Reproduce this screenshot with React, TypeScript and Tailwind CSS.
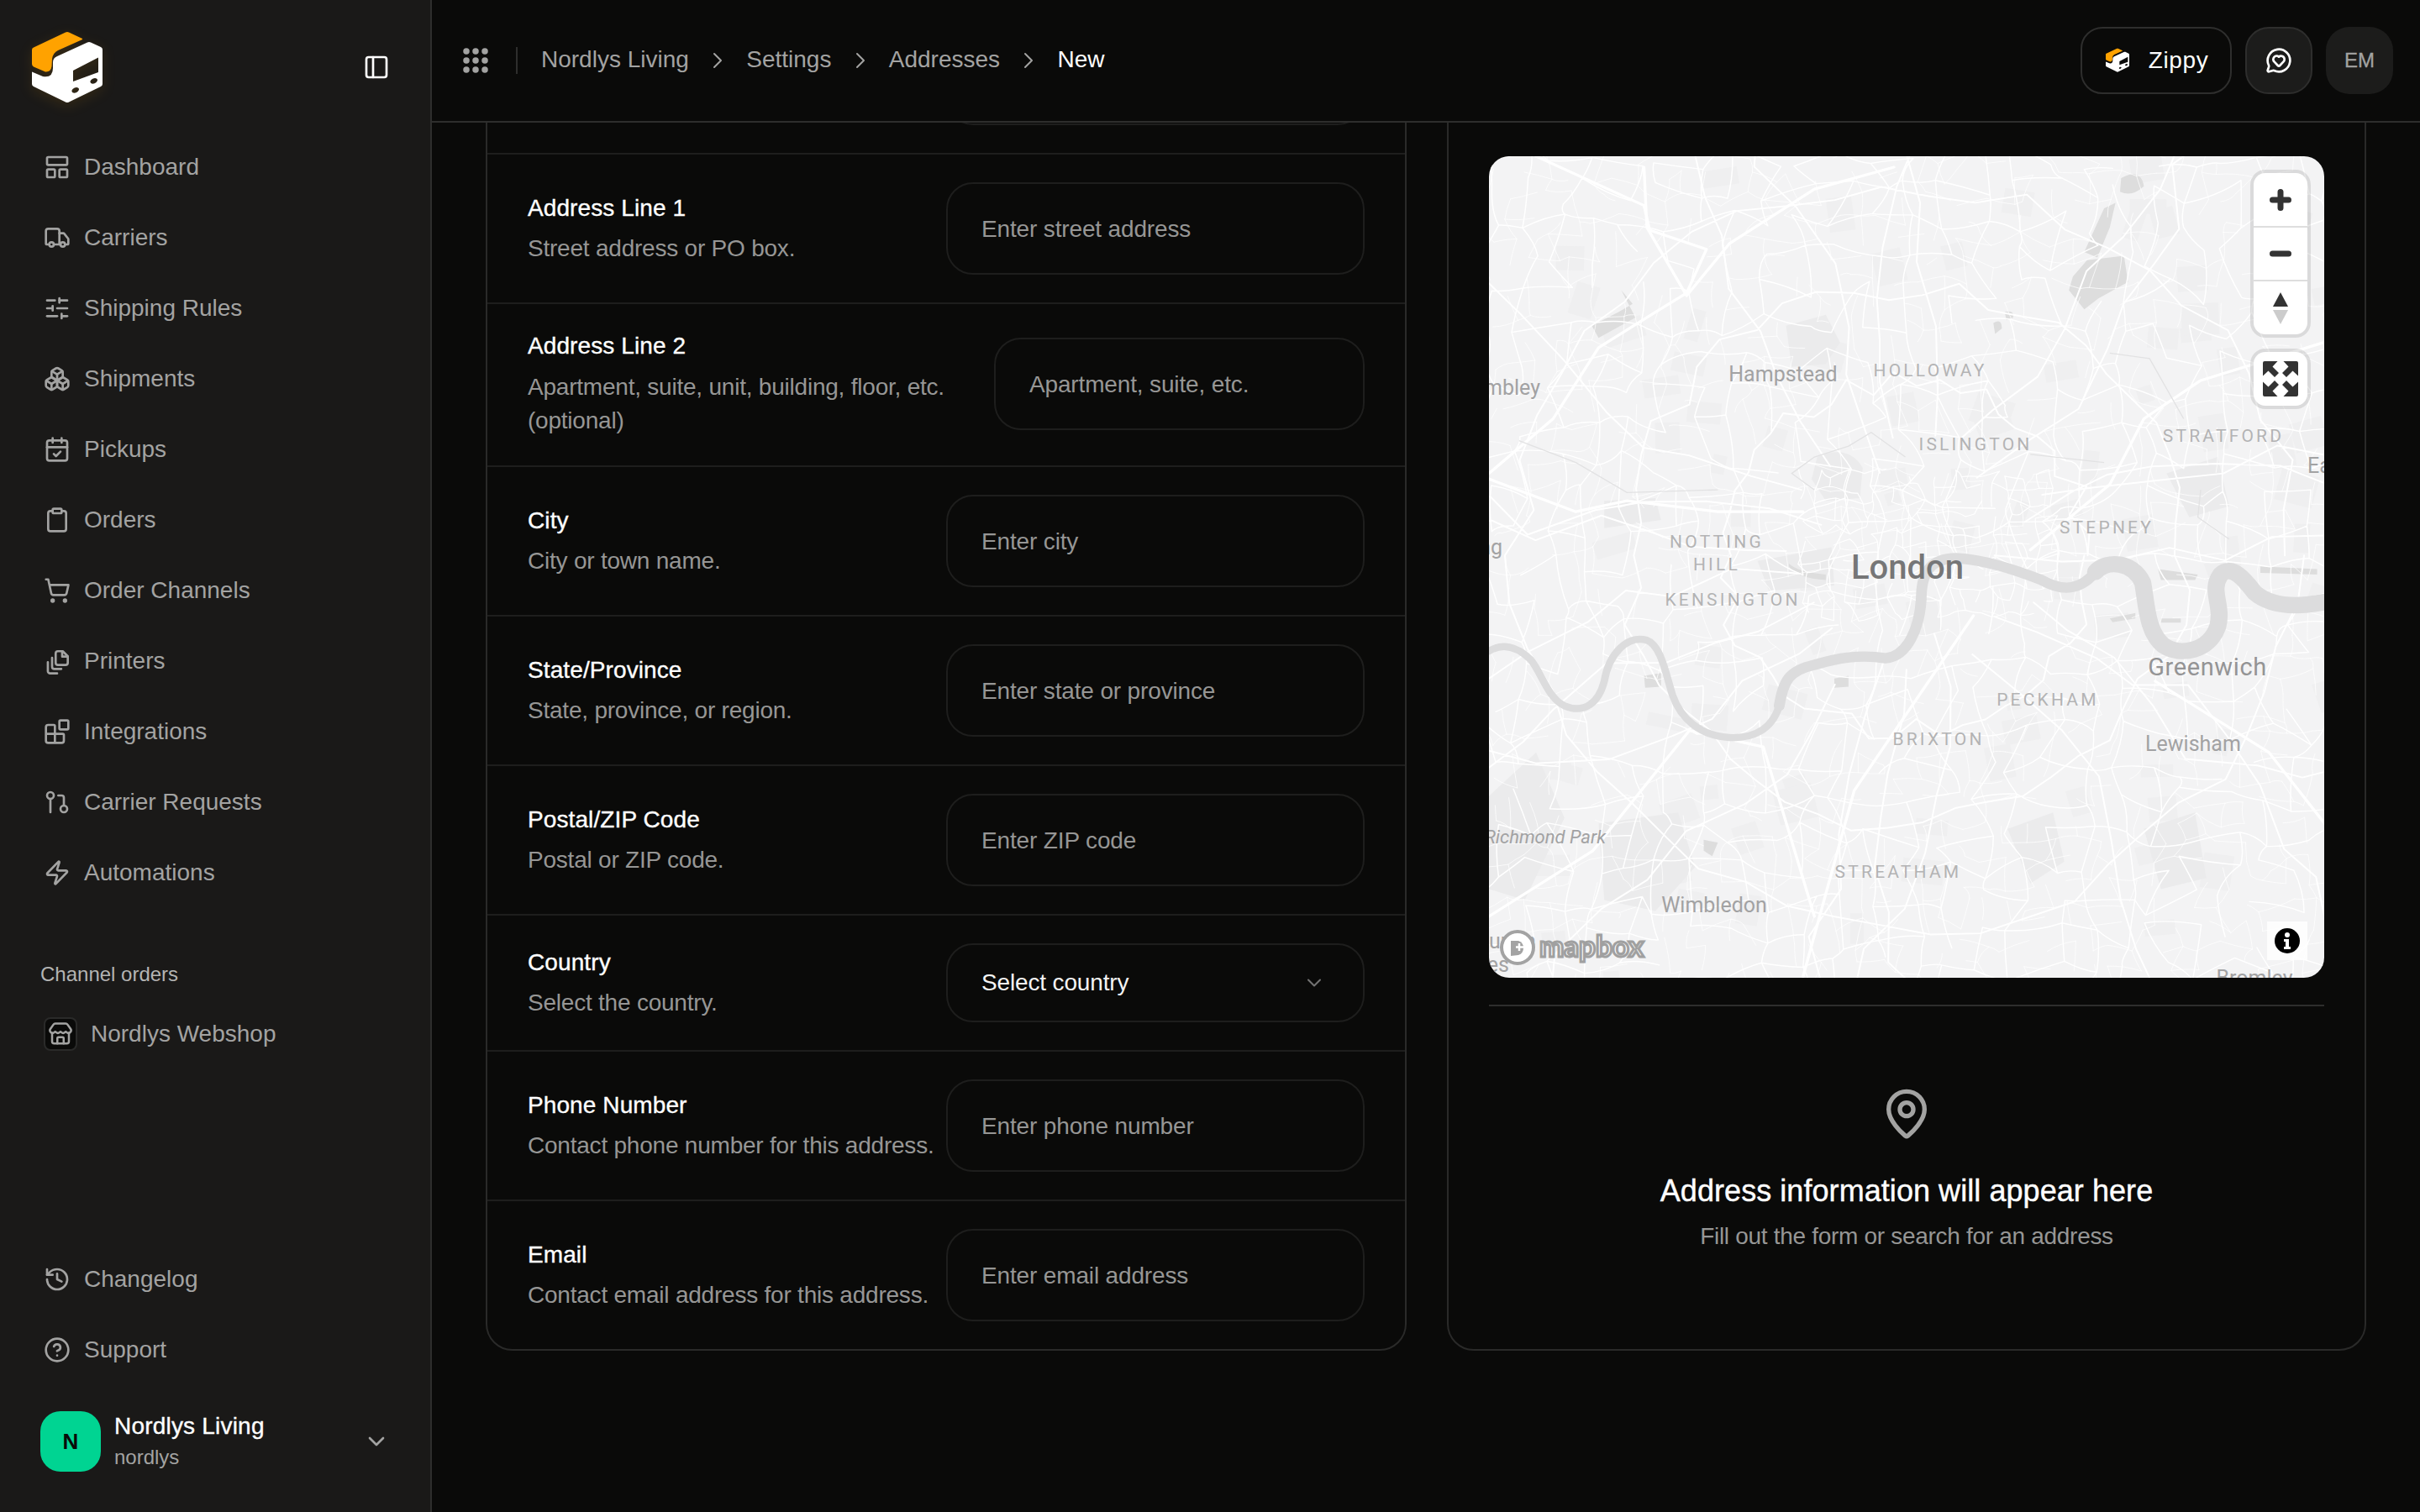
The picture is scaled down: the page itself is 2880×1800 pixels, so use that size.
import {
  Blocks,
  Boxes,
  CalendarCheck,
  ChevronDown,
  ChevronRight,
  CircleHelp,
  Clipboard,
  GitPullRequest,
  History,
  LayoutPanelTop,
  MapPin,
  MessageCircleHeart,
  PanelLeft,
  ShoppingCart,
  SlidersHorizontal,
  Store,
  Truck,
  Zap,
} from "lucide-react";

function PrintersIcon({ className }: { className?: string }) {
  return (
    <svg
      viewBox="0 0 24 24"
      fill="none"
      stroke="currentColor"
      strokeWidth="2"
      strokeLinecap="round"
      strokeLinejoin="round"
      className={className}
    >
      <path d="M12.7 3.2h4.3l4.5 4.5v5.8a2 2 0 0 1-2 2h-6.8a2 2 0 0 1-2-2v-8.3a2 2 0 0 1 2-2z" />
      <path d="M16.5 3.5v4.5h4.8" />
      <path d="M7.5 9v8a2 2 0 0 0 2 2h6.2" />
      <path d="M3.7 13v8a2 2 0 0 0 2 2h6.3" />
    </svg>
  );
}

const navItems = [
  { label: "Dashboard", icon: LayoutPanelTop },
  { label: "Carriers", icon: Truck },
  { label: "Shipping Rules", icon: SlidersHorizontal },
  { label: "Shipments", icon: Boxes },
  { label: "Pickups", icon: CalendarCheck },
  { label: "Orders", icon: Clipboard },
  { label: "Order Channels", icon: ShoppingCart },
  { label: "Printers", icon: PrintersIcon },
  { label: "Integrations", icon: Blocks },
  { label: "Carrier Requests", icon: GitPullRequest },
  { label: "Automations", icon: Zap },
];

function Logo({ className }: { className: string }) {
  return (
    <svg viewBox="0 0 96 96" className={className}>
      <path
        d="M46 5.5 Q48 4.5 50 5.5 L66 13 Q66.5 14 65 14.5 L37 27 Q31 30 30 37 L29.5 46 Q28.5 53 22 52.5 L8 46.5 Q6 45.5 6 43 L6 26.5 Q6 24 8 23.5 Z"
        fill="#ffa200"
      />
      <path
        fillRule="evenodd"
        d="M72 17.5 Q74 16.5 76 17.5 L88 23 Q90 24 90 26 L90 67 Q90 69 88 70 L50 88.5 Q48 89.5 46 88.5 L8 70 Q6 69 6 67 L6 52.5 L19 58 Q31 60 31 48 L31 41 Q31 36 36 34 Z M55 51 L85 35.5 L85 53 L55 64 Z M59 71 a4.5 3 -25 1 0 0.01 0 Z M81 60 a4.5 3 -25 1 0 0.01 0 Z"
        fill="#fff"
      />
    </svg>
  );
}

function Sidebar() {
  return (
    <aside className="flex h-full w-[514px] shrink-0 flex-col border-r-2 border-[#2e2e2d] bg-[#1a1918] text-[28px] leading-[40px] text-[#a3a3a2]">
      <div className="flex h-[157px] items-start justify-between pl-[32px] pr-[48px] pt-[33px]">
        <Logo className="size-[96px] drop-shadow-[0_4px_8px_rgba(255,162,0,0.12)]" />
        <PanelLeft className="mt-[31px] size-[32px] text-white" />
      </div>

      <nav className="flex flex-col">
        {navItems.map(({ label, icon: Icon }) => (
          <a key={label} className="flex h-[84px] items-center gap-4 pl-[52px]">
            <Icon className="size-8" />
            {label}
          </a>
        ))}
      </nav>

      <div className="mt-[63px] pl-[48px] text-[24px] leading-[32px] text-[#b4b4b3]">Channel orders</div>
      <a className="mt-[13px] flex h-[84px] items-center gap-4 pl-[52px]">
        <span className="flex size-[40px] items-center justify-center rounded-[8px] border-2 border-[#2a2a29] bg-[#0a0a09]">
          <Store className="size-[30px]" />
        </span>
        Nordlys Webshop
      </a>

      <div className="mt-auto flex flex-col">
        <a className="flex h-[84px] items-center gap-4 pl-[52px]">
          <History className="size-8" />
          Changelog
        </a>
        <a className="flex h-[84px] items-center gap-4 pl-[52px]">
          <CircleHelp className="size-8" />
          Support
        </a>
      </div>

      <div className="mb-[48px] mt-[30px] flex items-center gap-[16px] pl-[48px] pr-[48px]">
        <div className="flex size-[72px] items-center justify-center rounded-[24px] bg-[#00d492] text-[26px] font-bold text-[#0a0a09]">
          N
        </div>
        <div className="flex flex-1 flex-col">
          <span className="text-[28px] leading-[38px] tracking-[0.2px] text-white [-webkit-text-stroke:0.35px_white]">
            Nordlys Living
          </span>
          <span className="mt-[1px] text-[24px] leading-[34px] text-[#a3a3a2]">nordlys</span>
        </div>
        <ChevronDown className="size-8" />
      </div>
    </aside>
  );
}

function Crumb({ label, last }: { label: string; last?: boolean }) {
  return (
    <>
      <span className={`-mt-[2px] ${last ? "text-white" : ""}`}>{label}</span>
      {!last && <ChevronRight strokeWidth={1.5} className="size-8" />}
    </>
  );
}

function Header() {
  return (
    <header className="z-10 flex h-[146px] shrink-0 items-center justify-between border-b-2 border-[#2e2e2d] bg-[#0a0a09] pl-[36px] pr-[32px]">
      <div className="flex items-center text-[28px] leading-[40px] text-[#a3a3a2]">
        <svg viewBox="0 0 32 32" className="size-8" fill="#a3a3a2">
          {[5, 16, 27].map((y) =>
            [5, 16, 27].map((x) => <circle key={`${x}-${y}`} cx={x} cy={y} r={3.75} />)
          )}
        </svg>
        <div className="ml-[32px] mr-[28px] h-[32px] w-[2px] bg-[#2e2e2d]" />
        <div className="flex items-center gap-[18.2px]">
          <Crumb label="Nordlys Living" />
          <Crumb label="Settings" />
          <Crumb label="Addresses" />
          <Crumb label="New" last />
        </div>
      </div>
      <div className="flex items-center gap-[16px]">
        <button className="flex h-[80px] w-[180px] items-center justify-center gap-[21px] rounded-[26px] border-2 border-[#2e2e2d] text-[28px] tracking-[0.6px] text-white">
          <Logo className="size-[32px]" />
          Zippy
        </button>
        <button className="flex size-[80px] items-center justify-center rounded-[28px] border-2 border-[#2e2e2d] bg-[#1c1c1b] text-white">
          <MessageCircleHeart className="size-8" />
        </button>
        <div className="flex size-[80px] items-center justify-center rounded-[28px] bg-[#1c1c1b] text-[24px] text-[#a3a3a2] [-webkit-text-stroke:0.3px_#a3a3a2]">
          EM
        </div>
      </div>
    </header>
  );
}

function FieldText({ label, children, wrap }: { label: string; children: React.ReactNode; wrap?: boolean }) {
  return (
    <>
      <div className="text-[28px] leading-[40px] tracking-[0.1px] text-white [-webkit-text-stroke:0.35px_white]">{label}</div>
      <div
        className={`text-[28px] leading-[40px] tracking-[-0.22px] text-[#969695] ${
          wrap ? "mt-[9px]" : "mt-2 whitespace-nowrap"
        }`}
      >
        {children}
      </div>
    </>
  );
}

function Field({ label, children, placeholder }: { label: string; children: React.ReactNode; placeholder: string }) {
  return (
    <div className="flex items-center justify-between border-t-2 border-[#1e1e1d] py-[33px] pl-[48px] pr-[48px]">
      <div className="min-w-0 flex-1">
        <FieldText label={label}>{children}</FieldText>
      </div>
      <div className="flex h-[110px] w-[498px] shrink-0 items-center rounded-[32px] border-2 border-[#1e1e1d] pl-[40px] pt-[2px] text-[28px] tracking-[-0.15px] text-[#969695]">
        {placeholder}
      </div>
    </div>
  );
}

function FormCard() {
  return (
    <div className="overflow-hidden rounded-[32px] border-2 border-[#2a2a29]">
      {/* row scrolled away under the header */}
      <div className="flex justify-end py-[33px] pr-[48px]">
        <div className="h-[110px] w-[498px] rounded-[32px] border-2 border-[#1e1e1d]" />
      </div>
      <Field label="Address Line 1" placeholder="Enter street address">
        Street address or PO box.
      </Field>
      <div className="flex items-center justify-between border-t-2 border-[#1e1e1d] pb-[33px] pl-[48px] pr-[48px] pt-[30px]">
        <div className="min-w-0 flex-1">
          <FieldText label="Address Line 2" wrap>
            Apartment, suite, unit, building, floor, etc. (optional)
          </FieldText>
        </div>
        <div className="flex h-[110px] w-[441px] shrink-0 items-center rounded-[32px] border-2 border-[#1e1e1d] pl-[40px] pt-[2px] text-[28px] tracking-[-0.15px] text-[#969695]">
          Apartment, suite, etc.
        </div>
      </div>
      <Field label="City" placeholder="Enter city">
        City or town name.
      </Field>
      <Field label="State/Province" placeholder="Enter state or province">
        State, province, or region.
      </Field>
      <Field label="Postal/ZIP Code" placeholder="Enter ZIP code">
        Postal or ZIP code.
      </Field>
      <div className="flex items-center justify-between border-t-2 border-[#1e1e1d] py-[33px] pl-[48px] pr-[48px]">
        <div>
          <FieldText label="Country">Select the country.</FieldText>
        </div>
        <div className="flex h-[94px] w-[498px] items-center justify-between rounded-[32px] border-2 border-[#1e1e1d] pl-[40px] pr-[44px] text-[28px] tracking-[-0.15px] text-[#f4f4f4]">
          Select country
          <ChevronDown className="size-7 text-[#737373]" strokeWidth={1.75} />
        </div>
      </div>
      <Field label="Phone Number" placeholder="Enter phone number">
        Contact phone number for this address.
      </Field>
      <Field label="Email" placeholder="Enter email address">
        Contact email address for this address.
      </Field>
    </div>
  );
}

// seeded so the street web is the same on every load
function makeRandom(seed: number) {
  return () => {
    seed = (seed + 0x6d2b79f5) | 0;
    let t = Math.imul(seed ^ (seed >>> 15), 1 | seed);
    t = (t + Math.imul(t ^ (t >>> 7), 61 | t)) ^ t;
    return ((t ^ (t >>> 14)) >>> 0) / 4294967296;
  };
}

function jitterGrid(seed: number, x0: number, y0: number, x1: number, y1: number, cell: number, keep: number) {
  const rnd = makeRandom(seed);
  const cols = Math.ceil((x1 - x0) / cell);
  const rows = Math.ceil((y1 - y0) / cell);
  const pts: [number, number][][] = [];
  for (let i = 0; i <= cols; i++) {
    pts[i] = [];
    for (let j = 0; j <= rows; j++) {
      pts[i][j] = [x0 + i * cell + (rnd() - 0.5) * cell * 0.8, y0 + j * cell + (rnd() - 0.5) * cell * 0.8];
    }
  }
  const seg = (a: [number, number], b: [number, number]) => {
    const cx = (a[0] + b[0]) / 2 + (rnd() - 0.5) * cell * 0.3;
    const cy = (a[1] + b[1]) / 2 + (rnd() - 0.5) * cell * 0.3;
    return `M${a[0].toFixed(0)} ${a[1].toFixed(0)}Q${cx.toFixed(0)} ${cy.toFixed(0)} ${b[0].toFixed(0)} ${b[1].toFixed(0)}`;
  };
  let d = "";
  for (let i = 0; i <= cols; i++) {
    for (let j = 0; j <= rows; j++) {
      if (i < cols && rnd() < keep) d += seg(pts[i][j], pts[i + 1][j]);
      if (j < rows && rnd() < keep) d += seg(pts[i][j], pts[i][j + 1]);
    }
  }
  return d;
}

function radialRoads(seed: number) {
  const rnd = makeRandom(seed);
  let d = "";
  for (let a = 0; a < 22; a++) {
    let ang = (a / 22) * Math.PI * 2 + rnd() * 0.14;
    let r = 150 + rnd() * 120;
    d += `M${(780 + Math.cos(ang) * r).toFixed(0)} ${(770 + Math.sin(ang) * r).toFixed(0)}`;
    while (r < 1200) {
      r += 70 + rnd() * 50;
      ang += (rnd() - 0.5) * 0.2;
      d += `L${(780 + Math.cos(ang) * r).toFixed(0)} ${(770 + Math.sin(ang) * r).toFixed(0)}`;
    }
  }
  for (const radius of [320, 490, 680]) {
    let first = true;
    for (let a = 0; a <= 50; a++) {
      const ang = (a / 50) * Math.PI * 2;
      const r = radius + (rnd() - 0.5) * 50;
      d += `${first ? "M" : "L"}${(780 + Math.cos(ang) * r).toFixed(0)} ${(770 + Math.sin(ang) * r).toFixed(0)}`;
      first = false;
    }
  }
  return d;
}

function blocks(seed: number) {
  const rnd = makeRandom(seed);
  const list: { x: number; y: number; w: number; h: number; r: number }[] = [];
  for (let i = 0; i < 90; i++) {
    list.push({
      x: 47 + rnd() * 1471,
      y: 40 + rnd() * 1503,
      w: 24 + rnd() * 50,
      h: 22 + rnd() * 44,
      r: rnd() * 40 - 20,
    });
  }
  return list;
}

const fineStreets = jitterGrid(31, 47, 40, 1518, 1543, 38, 0.42);
const streets = jitterGrid(11, 47, 40, 1518, 1543, 62, 0.72);
const centreStreets = jitterGrid(23, 600, 620, 1040, 860, 26, 0.68);
const arterials = radialRoads(7);
const mapBlocks = blocks(5);

const faintLabels = [
  { t: "HOLLOWAY", x: 525, y: 255 },
  { t: "ISLINGTON", x: 579, y: 343 },
  { t: "STRATFORD", x: 874, y: 333 },
  { t: "NOTTING", x: 271, y: 459 },
  { t: "HILL", x: 271, y: 486 },
  { t: "KENSINGTON", x: 290, y: 528 },
  { t: "STEPNEY", x: 735, y: 442 },
  { t: "PECKHAM", x: 665, y: 647 },
  { t: "BRIXTON", x: 535, y: 694 },
  { t: "STREATHAM", x: 487, y: 852 },
];

const placeLabels = [
  { t: "Hampstead", x: 350, y: 259, a: "middle" },
  { t: "Wembley", x: 61, y: 275, a: "end" },
  { t: "Ealing", x: 16, y: 465, a: "end" },
  { t: "Ea", x: 974, y: 368, a: "start" },
  { t: "Lewisham", x: 838, y: 699, a: "middle" },
  { t: "Wimbledon", x: 268, y: 891, a: "middle" },
  { t: "Bromley", x: 911, y: 978, a: "middle" },
  { t: "upon", x: 0, y: 934, a: "start" },
  { t: "Thames", x: 24, y: 962, a: "end" },
];

function MapArt() {
  return (
    <svg viewBox="0 0 994 978" className="block h-full w-full font-['Roboto',sans-serif]">
      <rect width="994" height="978" fill="#f3f3f4" />
      <g transform="translate(-31.8 -26) scale(0.676 0.651)">
        {mapBlocks.map((b, i) => (
          <rect key={i} x={b.x} y={b.y} width={b.w} height={b.h} fill="#efeff0" transform={`rotate(${b.r} ${b.x} ${b.y})`} />
        ))}
        {/* parks */}
        <g fill="#ebebec">
          <path d="M570 350 L640 330 L665 380 L640 420 L580 425 Z" />
          <path d="M520 780 L650 755 L655 825 L540 835 Z" />
          <path d="M625 590 Q680 565 705 610 L700 665 L640 670 L615 630 Z" />
          <path d="M240 1260 L380 1240 L410 1340 L340 1420 L250 1400 Z" />
          <path d="M47 1210 L130 1130 L180 1250 L110 1400 L47 1380 Z" />
          <path d="M250 670 L340 665 L350 705 L250 720 Z" />
          <path d="M960 1270 L1040 1240 L1060 1330 L1000 1370 Z" />
          <path d="M1240 620 L1330 590 L1350 680 L1280 700 Z" />
          <path d="M1200 1270 L1290 1240 L1310 1360 L1230 1380 Z" />
        </g>
        {/* reservoirs and lakes */}
        <g fill="#dddddd">
          <path d="M1130 135 L1150 125 L1140 170 L1118 225 L1095 215 Z" />
          <path d="M1100 230 L1165 222 L1172 270 L1120 300 L1095 320 L1068 285 L1075 260 Z" />
          <path d="M1160 80 Q1195 60 1200 95 Q1180 115 1158 105 Z" />
          <path d="M228 350 L275 325 L300 310 L280 285 L305 335 L240 372 Z" />
          <path d="M575 785 Q590 800 640 805 L640 815 Q590 812 575 790 Z" />
          <path d="M935 345 Q950 335 950 355 L938 365 Z M955 325 Q972 320 970 335 L958 340 Z" />
          <path d="M1405 790 L1505 795 L1505 805 L1405 802 Z" />
          <path d="M320 990 L350 985 L350 1010 L322 1012 Z" />
          <path d="M655 995 L680 990 L680 1010 L655 1012 Z" />
          <path d="M1140 885 L1185 875 L1185 885 L1145 892 Z" />
          <path d="M1225 795 L1295 805 L1290 815 L1230 815 Z M1230 885 L1265 885 L1265 893 L1230 893 Z" />
          <path d="M425 1290 L450 1295 L440 1320 L425 1310 Z" />
        </g>
        {/* streets */}
        <g fill="none" stroke="#ffffff" strokeLinejoin="round" strokeLinecap="round">
          <path d={fineStreets} strokeWidth="1.4" strokeOpacity="0.8" />
          <path d={streets} strokeWidth="2.2" />
          <path d={centreStreets} strokeWidth="1.8" />
          <path d={arterials} strokeWidth="3" />
          <path
            strokeWidth="5"
            d="M130 40 L320 130 L330 175 L430 210 L395 290 L340 325 L240 390 L160 520 L47 620 M320 60 L325 170 L395 295 L470 200 L620 100 L760 60 M47 630 L200 690 L290 670 L450 690 L600 690 M1518 380 L1300 450 L1200 520 L1140 640 L1000 760 M620 1430 L530 1120 L400 1090 L230 1310 L47 1430 M900 880 L690 1200 L600 1540 M1220 1000 L1420 1130 L1518 1260"
          />
        </g>
        {/* river */}
        <g fill="none" stroke="#dcdcdd" strokeLinecap="round" strokeLinejoin="round">
          <path
            strokeWidth="13"
            d="M47 945 C70 930 95 935 120 960 C140 985 150 1030 180 1045 C215 1060 240 1040 250 1000 C258 950 290 915 325 925 C350 935 358 985 370 1025 C385 1070 420 1100 470 1103 C510 1105 545 1090 558 1045"
          />
          <path
            strokeWidth="19"
            d="M558 1045 C565 1000 575 980 620 970 C660 958 700 950 745 958 C785 955 805 900 808 850 C808 800 825 775 870 775 C920 778 970 795 1020 815 C1060 838 1090 832 1115 800"
          />
          <path
            strokeWidth="30"
            d="M1115 800 C1135 778 1180 780 1198 820 C1205 860 1205 910 1235 935 C1265 955 1315 945 1330 900 C1340 860 1315 835 1335 805 C1355 785 1378 815 1395 838 C1425 865 1470 865 1518 855"
          />
        </g>
        <g fill="none" stroke="#e2e2e3" strokeWidth="2">
          <path d="M100 560 L200 600 L290 655 L450 650 M620 650 L580 620 L620 590 L680 570 L720 545 L780 590 M1000 585 L1130 600 M1300 650 L1295 700 L1350 740 M1140 400 L1210 410 L1270 520" />
        </g>
      </g>

      {/* map labels */}
      <g textAnchor="middle" dominantBaseline="central">
        <text x="498" y="489" fontSize="40" fontWeight="500" fill="#767677">
          London
        </text>
        <text x="855" y="608" fontSize="29" fill="#949495" letterSpacing="0.6">
          Greenwich
        </text>
        {faintLabels.map((l) => (
          <text key={l.t} x={l.x} y={l.y} fontSize="21" fill="#b3b3b4" letterSpacing="3.2">
            {l.t}
          </text>
        ))}
        {placeLabels.map((l) => (
          <text key={l.t} x={l.x} y={l.y} fontSize="25" fill="#a2a2a3" textAnchor={l.a}>
            {l.t}
          </text>
        ))}
        <text x="139" y="810" fontSize="22" fontStyle="italic" fill="#a2a2a3" textAnchor="end">
          Richmond Park
        </text>
      </g>

      {/* mapbox wordmark */}
      <g>
        <circle cx="34" cy="942" r="19" fill="#fff" stroke="#a3a3a3" strokeWidth="4" />
        <path d="M26 934 h9 a9 9 0 0 1 0 17 l-9 1 Z" fill="#a3a3a3" />
        <path d="M36 937 v9 M32 941.5 h9" stroke="#fff" strokeWidth="2.5" />
        <text
          x="60"
          y="939"
          fontSize="35"
          fontWeight="700"
          fill="#fff"
          stroke="#a0a0a0"
          strokeWidth="3"
          dominantBaseline="central"
          className="font-['Lato',sans-serif]"
        >
          mapbox
        </text>
      </g>
    </svg>
  );
}

function MapControls() {
  return (
    <div className="absolute right-[20px] top-[20px] flex flex-col gap-[21px]">
      <div className="flex w-[64px] flex-col divide-y-2 divide-[#dedede] rounded-[14px] bg-white ring-4 ring-black/10">
        <div className="flex h-[65px] items-center justify-center">
          <svg viewBox="0 0 26 26" className="size-[26px]" stroke="#333" strokeWidth="7" strokeLinecap="round">
            <path d="M3.5 13 H22.5 M13 3.5 V22.5" />
          </svg>
        </div>
        <div className="flex h-[64px] items-center justify-center">
          <svg viewBox="0 0 26 8" className="h-[8px] w-[26px]" stroke="#333" strokeWidth="7" strokeLinecap="round">
            <path d="M3.5 4 H22.5" />
          </svg>
        </div>
        <div className="flex h-[63px] items-center justify-center">
          <svg viewBox="0 0 18 38" className="h-[38px] w-[18px]">
            <path d="M9 0 L18 17 H0 Z" fill="#333" />
            <path d="M9 38 L0 21 H18 Z" fill="#ccc" />
          </svg>
        </div>
      </div>
      <div className="flex size-[64px] items-center justify-center rounded-[14px] bg-white ring-4 ring-black/10">
        <svg viewBox="0 0 42 42" className="size-[42px]" fill="#333">
          {[0, 90, 180, 270].map((r) => (
            <path key={r} transform={`rotate(${r} 21 21)`} d="M2 0 H17.5 L11.5 6.5 L19 14 L14 19 L6.5 11.5 L0 17.5 V2 Q0 0 2 0 Z" />
          ))}
        </svg>
      </div>
    </div>
  );
}

function AddressCard() {
  return (
    <div className="flex flex-col rounded-[32px] border-2 border-[#2a2a29] px-[48px] pt-[180px]">
      <div className="relative h-[978px] overflow-hidden rounded-[24px]">
        <MapArt />
        <MapControls />
        <div className="absolute bottom-[21px] right-[20px] flex h-[46px] w-[48px] items-center justify-center bg-white/80">
          <svg viewBox="0 0 30 30" className="size-[30px]">
            <circle cx="15" cy="15" r="15" fill="#000" />
            <circle cx="15" cy="8" r="3" fill="#fff" />
            <path d="M11 13 h6 v9 h2 v3 h-8 v-3 h2 v-6 h-2 Z" fill="#fff" />
          </svg>
        </div>
      </div>
      <div className="mt-[32px] h-[2px] bg-[#2e2e2d]" />
      <div className="flex flex-col items-center pt-[96px]">
        <MapPin className="size-16 text-[#a3a3a2]" />
        <div className="mt-[36px] text-[36px] leading-[48px] tracking-[0.06px] text-white [-webkit-text-stroke:0.4px_white]">
          Address information will appear here
        </div>
        <div className="mt-[10px] text-[28px] leading-[40px] tracking-[-0.3px] text-[#969695]">
          Fill out the form or search for an address
        </div>
      </div>
    </div>
  );
}

export default function App() {
  return (
    <div className="flex h-screen w-screen overflow-hidden bg-[#0a0a09] font-['Liberation_Sans',Arial,sans-serif]">
      <Sidebar />
      <div className="flex min-w-0 flex-1 flex-col">
        <Header />
        <main className="flex-1 overflow-hidden">
          <div className="-mt-[142px] grid grid-cols-[1096px_1094px] gap-[48px] pl-[64px]">
            <FormCard />
            <AddressCard />
          </div>
        </main>
      </div>
    </div>
  );
}
